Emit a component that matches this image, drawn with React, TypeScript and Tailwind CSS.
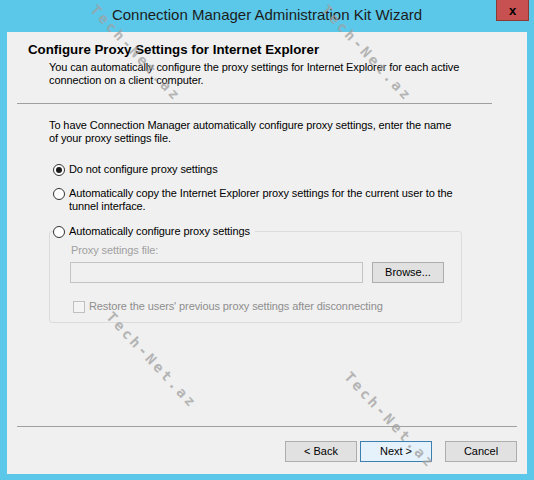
import { ReactNode } from "react";

const ui = { fontFamily: '"Liberation Sans", Arial, sans-serif' };

function Radio({ checked, children }: { checked?: boolean; children: ReactNode }) {
  return (
    <div className="flex items-start gap-[4px]">
      <span className="mt-[0.5px] flex h-[12px] w-[12px] shrink-0 items-center justify-center rounded-full border border-[#333] bg-white">
        {checked && <span className="h-[6px] w-[6px] rounded-full bg-[#1a1a1a]" />}
      </span>
      <span className="text-[11px] leading-[13px] tracking-[-0.1px] text-black">{children}</span>
    </div>
  );
}

function Button({ label, focused, className = "" }: { label: string; focused?: boolean; className?: string }) {
  return (
    <button
      className={`block h-[21px] w-[72px] border text-[11px] leading-[13px] text-black ${
        focused ? "border-[#3c7fb1] bg-[#e5f1fb]" : "border-[#adadad] bg-[#e1e1e1]"
      } ${className}`}
    >
      {label}
    </button>
  );
}

// watermark centres, taken from the screenshot
const marks = [
  { x: 136, y: 53 },
  { x: 367, y: 53 },
  { x: 152, y: 360 },
  { x: 390, y: 420 },
];

export default function App() {
  return (
    <div className="relative flex h-[480px] w-[534px] flex-col overflow-hidden bg-[#5bc8ea]" style={ui}>
      <div className="relative flex h-[32px] items-center justify-center">
        <span className="pb-[2px] text-[15px] text-[#1c1c1c]">Connection Manager Administration Kit Wizard</span>
        <div className="absolute right-[5px] top-0 flex h-[21px] w-[33px] items-center justify-center border border-t-0 border-[#8a3a33] bg-[#c75050] text-[13px] font-bold leading-none text-black">
          x
        </div>
      </div>

      <div className="mx-[7px] mb-[6px] flex flex-1 flex-col bg-[#f0f0f0]">
        <div className="pl-[21px] pt-[9px] text-[13.3px] font-bold leading-[18px] text-black">
          Configure Proxy Settings for Internet Explorer
        </div>
        <p className="mt-[2px] pl-[42px] text-[11px] leading-[13px] tracking-[-0.1px] text-black">
          You can automatically configure the proxy settings for Internet Explorer for each active
          <br />
          connection on a client computer.
        </p>

        <div className="ml-[10px] mt-[16px] h-px w-[475px] bg-[#a0a0a0]" />

        <div className="pl-[42px]">
          <p className="mt-[15px] text-[11px] leading-[13px] tracking-[-0.1px] text-black">
            To have Connection Manager automatically configure proxy settings, enter the name
            <br />
            of your proxy settings file.
          </p>

          <div className="ml-[4px] mt-[18px]">
            <Radio checked>Do not configure proxy settings</Radio>
          </div>
          <div className="ml-[4px] mt-[11px]">
            <Radio>
              Automatically copy the Internet Explorer proxy settings for the current user to the
              <br />
              tunnel interface.
            </Radio>
          </div>

          <fieldset className="mt-[12px] w-[413px] rounded-[3px] border border-[#dcdcdc] px-[3px] pb-[9px]">
            <legend className="pr-[5px]">
              <Radio>Automatically configure proxy settings</Radio>
            </legend>
            <div className="ml-[18px] mt-[6px] text-[11px] leading-[13px] tracking-[-0.1px] text-[#a0a0a0]">
              Proxy settings file:
            </div>
            <div className="ml-[17px] mt-[5px] flex items-center gap-[9px]">
              <div className="h-[21px] w-[293px] border border-[#c4c4c4] bg-[#f0f0f0]" />
              <Button label="Browse..." />
            </div>
            <label className="ml-[20px] mt-[17px] flex items-center gap-[4px]">
              <span className="h-[12px] w-[12px] border border-[#c0c0c0] bg-[#f4f4f4]" />
              <span className="text-[11px] leading-[13px] tracking-[-0.1px] text-[#8e8e8e]">
                Restore the users' previous proxy settings after disconnecting
              </span>
            </label>
          </fieldset>
        </div>

        <div className="mt-auto">
          <div className="mx-[10px] h-px bg-[#a0a0a0]" />
          <div className="mb-[12px] mr-[10px] mt-[14px] flex justify-end">
            <Button label="< Back" />
            <Button label="Next >" focused className="ml-[3px]" />
            <Button label="Cancel" className="ml-[13px]" />
          </div>
        </div>
      </div>

      {marks.map((m) => (
        <div
          key={m.x}
          className="pointer-events-none absolute -translate-x-1/2 -translate-y-1/2 rotate-[47deg] whitespace-nowrap text-[14px] font-bold leading-[16px] tracking-[3px] text-[#a0a0a0] opacity-75"
          style={{ left: m.x, top: m.y, fontFamily: '"DejaVu Sans Mono", monospace' }}
        >
          Tech-Net.az
        </div>
      ))}
    </div>
  );
}
